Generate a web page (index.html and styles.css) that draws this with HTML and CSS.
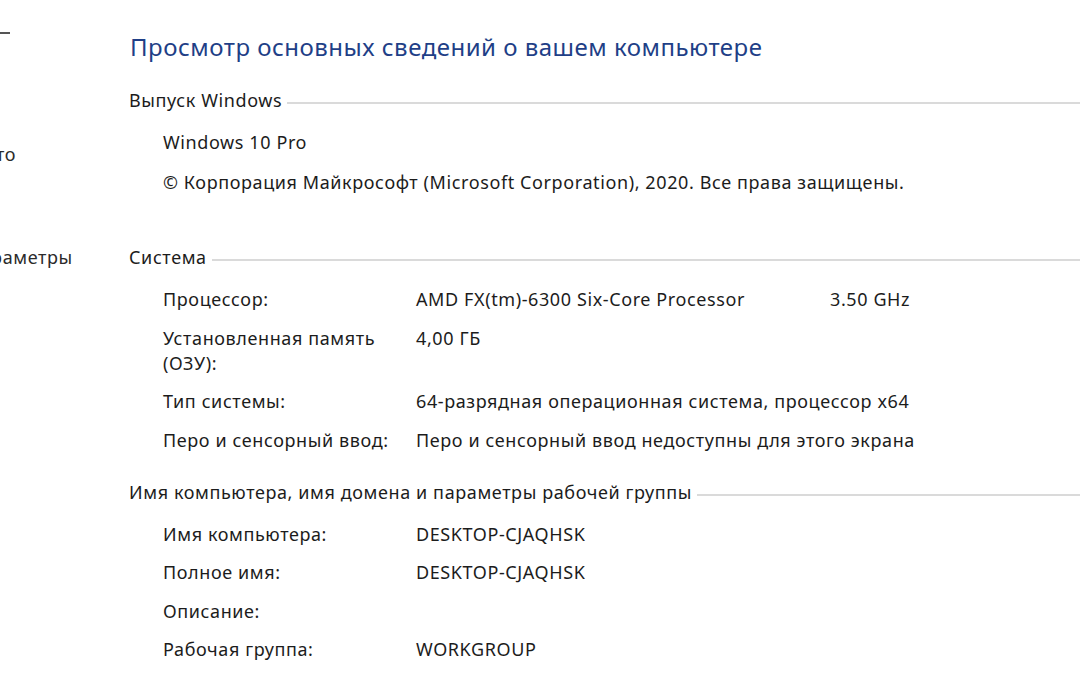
FILE: index.html
```html
<!DOCTYPE html>
<html lang="ru">
<head>
    <meta charset="UTF-8">
    <title>Система</title>
    <link rel="stylesheet" href="styles.css">
</head>
<body>
    <div class="window">
        <div class="sidebar">
            <span class="side-dash"></span>
            <div class="side-link first">Подробнее, что это</div>
            <div class="side-link second">Дополнительные параметры</div>
        </div>

        <div class="main">
            <h1>Просмотр основных сведений о вашем компьютере</h1>

            <div class="section edition">
                <div class="section-title"><span>Выпуск Windows</span></div>
                <div class="line">Windows 10 Pro</div>
                <div class="line">© Корпорация Майкрософт (Microsoft Corporation), 2020. Все права защищены.</div>
            </div>

            <div class="section">
                <div class="section-title"><span>Система</span></div>
                <div class="row">
                    <div class="label">Процессор:</div>
                    <div class="value">AMD FX(tm)-6300 Six-Core Processor</div>
                    <div class="extra">3.50 GHz</div>
                </div>
                <div class="row">
                    <div class="label">Установленная память (ОЗУ):</div>
                    <div class="value">4,00 ГБ</div>
                </div>
                <div class="row">
                    <div class="label">Тип системы:</div>
                    <div class="value">64-разрядная операционная система, процессор x64</div>
                </div>
                <div class="row">
                    <div class="label">Перо и сенсорный ввод:</div>
                    <div class="value">Перо и сенсорный ввод недоступны для этого экрана</div>
                </div>
            </div>

            <div class="section">
                <div class="section-title"><span>Имя компьютера, имя домена и параметры рабочей группы</span></div>
                <div class="row">
                    <div class="label">Имя компьютера:</div>
                    <div class="value">DESKTOP-CJAQHSK</div>
                </div>
                <div class="row">
                    <div class="label">Полное имя:</div>
                    <div class="value">DESKTOP-CJAQHSK</div>
                </div>
                <div class="row">
                    <div class="label">Описание:</div>
                    <div class="value"></div>
                </div>
                <div class="row">
                    <div class="label">Рабочая группа:</div>
                    <div class="value">WORKGROUP</div>
                </div>
            </div>
        </div>
    </div>
</body>
</html>
```

FILE: styles.css
```css
body {
    margin: 0;
    background: #ffffff;
    font-family: "Noto Sans", "Open Sans", sans-serif;
    font-size: 18px;
    letter-spacing: 0.6px;
    color: #1c1c1c;
    overflow: hidden;
}
.window {
    display: flex;
    height: 690px;
}
.sidebar {
    width: 129px;
    flex-shrink: 0;
    overflow: hidden;
    padding-top: 32px;
}
.side-dash {
    display: block;
    width: 10px;
    height: 2px;
    background: #555;
}
.side-link {
    white-space: nowrap;
    color: #2b2b2b;
}
.first {
    margin-top: 108px;
    margin-left: -164px;
}
.second {
    margin-top: 79px;
    margin-left: -196px;
}
.main {
    flex: 1;
    padding-top: 30px;
}
h1 {
    margin: 0 0 24px 1px;
    font-size: 24px;
    letter-spacing: 0.5px;
    font-weight: normal;
    color: #1f3f87;
    line-height: 34px;
}
.section {
    margin-bottom: 27px;
}
.section.edition {
    margin-bottom: 50px;
}
.section-title {
    display: flex;
    align-items: center;
    gap: 5px;
    line-height: 25px;
    margin-bottom: 17px;
}
.section-title span {
    white-space: nowrap;
}
.section-title::after {
    content: "";
    flex: 1;
    height: 2px;
    margin-top: 5px;
    background: #dadada;
}
.line {
    padding-left: 34px;
    line-height: 25px;
    margin-bottom: 15px;
    white-space: nowrap;
}
.row {
    display: flex;
    padding-left: 34px;
    line-height: 25px;
    margin-bottom: 13.5px;
}
.label {
    width: 240px;
    margin-right: 13px;
}
.value {
    width: 414px;
    flex-shrink: 0;
    white-space: nowrap;
}
.extra {
    white-space: nowrap;
}
```
